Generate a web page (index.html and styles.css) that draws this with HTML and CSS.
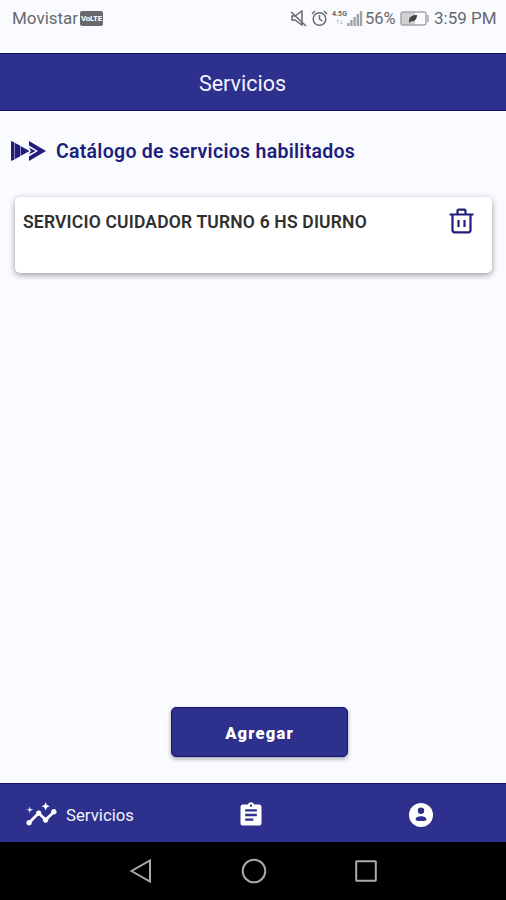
FILE: index.html
```html
<!DOCTYPE html>
<html lang="es">
<head>
  <meta charset="UTF-8">
  <meta name="viewport" content="width=device-width, initial-scale=1.0">
  <title>Servicios</title>
  <link rel="stylesheet" href="styles.css">
</head>
<body>
  <div class="status-bar">
    <span class="carrier">Movistar</span>
    <span class="volte">VoLTE</span>
    <div class="status-icons">
      <svg class="mute" viewBox="0 0 17 17" width="17" height="17">
        <path d="M2 6h3l7-5v14l-7-5H2zM1 2l15 14" />
      </svg>
      <svg class="alarm" viewBox="0 0 17 17" width="17" height="17">
        <circle cx="8.5" cy="9" r="6.3" />
        <path d="M8.5 5v4l3 2M1 4l3-3M16 4l-3-3" />
      </svg>
      <div class="network"><span>4.5G</span><span>↑↓</span></div>
      <svg class="signal" viewBox="0 0 16 16" width="16" height="16">
        <path d="M0 13h2.4v3H0zM3.2 10h2.4v6H3.2zM6.4 7h2.4v9H6.4zM9.6 4H12v12H9.6zM12.8 1h2.4v15h-2.4z" />
      </svg>
      <span class="percent">56%</span>
      <svg class="battery" viewBox="0 0 30 15" width="30" height="15">
        <rect class="charge" x="1" y="1" width="14" height="13" />
        <rect class="shell" x="1" y="1" width="25" height="13" rx="2" />
        <path class="shell" d="M28 4v7" />
        <path class="leaf" d="M9 11c0-5 2-7 8-7 0 5-3 7-6 6l-1 2z" />
      </svg>
      <span class="time">3:59 PM</span>
    </div>
  </div>

  <header class="app-bar">Servicios</header>

  <main>
    <h1>
      <svg viewBox="0 0 35 20" width="35" height="20">
        <path class="solid" d="M0 0l3.500 1.500v17L0 20zM4 2l5 2.500v11L4 18zM9.500 5l9 5-9 5zM18 0l17 10-17 10v-4.500l9-5.500-9-5.500z" />
        <path class="solid" d="M18 6.500l6.500 3.500-6.500 3.500 2-3.500z" />
      </svg>
      <span>Catálogo de servicios habilitados</span>
    </h1>
    <div class="card">
      <span>SERVICIO CUIDADOR TURNO 6 HS DIURNO</span>
      <svg class="trash" viewBox="0 0 25 26" width="25" height="26">
        <path d="M0.500 6.500h24M8.500 6V3q0-1.300 1.300-1.300h5.400q1.300 0 1.300 1.300v3M3.500 7v15q0 2.300 2.300 2.300h13.400q2.300 0 2.300-2.300V7M9.500 12v7M15.500 12v7" />
      </svg>
    </div>
    <button type="button">Agregar</button>
  </main>

  <nav class="tabs">
    <a class="tab tab-services">
      <svg viewBox="0 0 24 24" width="33" height="33">
        <path d="M21 8c-1.450 0-2.260 1.440-1.930 2.510l-3.550 3.560c-.3-.09-.74-.09-1.040 0l-2.550-2.550C12.270 10.450 11.460 9 10 9c-1.450 0-2.270 1.440-1.930 2.520l-4.560 4.550C2.440 15.740 1 16.550 1 18c0 1.100.9 2 2 2 1.450 0 2.260-1.440 1.930-2.510l4.550-4.560c.3.09.74.09 1.040 0l2.550 2.550C12.730 16.550 13.540 18 15 18c1.450 0 2.270-1.440 1.930-2.520l3.560-3.550c1.070.33 2.510-.48 2.510-1.930 0-1.100-.9-2-2-2z" />
        <path d="M15 9l.94-2.070L18 6l-2.060-.93L15 3l-.92 2.070L12 6l2.080.93zM3.500 11L4 9l2-.5L4 8l-.5-2L3 8l-2 .5L3 9z" />
      </svg>
      <span>Servicios</span>
    </a>
    <a class="tab tab-tasks">
      <svg viewBox="0 0 24 24" width="28" height="28">
        <path d="M19 3h-4.180C14.400 1.840 13.300 1 12 1s-2.400.84-2.820 2H5c-1.100 0-2 .9-2 2v14c0 1.100.9 2 2 2h14c1.100 0 2-.9 2-2V5c0-1.100-.9-2-2-2zm-7 0c.55 0 1 .45 1 1s-.45 1-1 1-1-.45-1-1 .45-1 1-1zm2 14H7v-2h7v2zm3-4H7v-2h10v2zm0-4H7V7h10v2z" />
      </svg>
    </a>
    <a class="tab tab-account">
      <svg viewBox="0 0 24 24" width="24" height="24">
        <circle cx="12" cy="12" r="12" />
        <circle class="cut" cx="12" cy="7.800" r="3.200" />
        <path class="cut" d="M6.500 16.500c0-4.500 11-4.500 11 0q-1 1.500-3 1.500h-5q-2 0-3-1.500z" />
      </svg>
    </a>
  </nav>

  <div class="system-nav">
    <svg viewBox="0 0 22 24" width="22" height="24"><path d="M20 1.500v21L1.500 12z" /></svg>
    <svg viewBox="0 0 26 26" width="26" height="26"><circle cx="13" cy="13" r="11.300" /></svg>
    <svg viewBox="0 0 22 22" width="22" height="22"><rect x="1.200" y="1.200" width="19.600" height="19.600" rx="0.500" /></svg>
  </div>
</body>
</html>
```
FILE: styles.css
```css
* {
  box-sizing: border-box;
}
body {
  margin: 0;
  height: 900px;
  display: flex;
  flex-direction: column;
  overflow: hidden;
  font-family: Roboto, sans-serif;
  background-color: #f9fbff;
}
svg {
  display: block;
  flex-shrink: 0;
}
.status-bar {
  height: 53px;
  padding: 0 11px 17px 12px;
  display: flex;
  align-items: center;
  color: #68696c;
  font-size: 17px;
  white-space: nowrap;
}
.carrier {
  width: 67px;
}
.volte {
  width: 23px;
  height: 15px;
  margin-left: 1px;
  border-radius: 2px;
  background-color: #68696c;
  color: #fff;
  font-size: 8px;
  font-weight: bold;
  line-height: 15px;
  letter-spacing: -0.3px;
  text-align: center;
}
.status-icons {
  margin-left: auto;
  display: flex;
  align-items: center;
}
.mute,
.alarm {
  fill: none;
  stroke: #68696c;
  stroke-width: 1.5;
}
.alarm {
  margin-left: 4px;
}
.network {
  width: 15px;
  margin: 0 0 0 4px;
  display: flex;
  flex-direction: column;
  align-items: center;
  font-size: 7px;
  font-weight: bold;
  line-height: 8px;
}
.signal {
  margin-right: 2px;
  fill: #a2a3a5;
}
.percent {
  width: 35px;
  font-size: 16.500px;
}
.charge {
  fill: #d0d1d3;
}
.shell {
  fill: none;
  stroke: #a5a6a8;
  stroke-width: 1.5;
}
.leaf {
  fill: #444;
}
.time {
  width: 61px;
  margin-left: 4px;
}
.app-bar {
  height: 58px;
  padding-right: 21px;
  border-top: 1px solid #10106f;
  border-bottom: 1px solid #10106f;
  background-color: #2d308c;
  color: #f2f3ff;
  font-size: 21.500px;
  line-height: 59px;
  text-align: center;
}
main {
  flex: 1;
  padding: 26px 14px 26px 15px;
  display: flex;
  flex-direction: column;
}
h1 {
  height: 28px;
  margin: 0 0 32px -4px;
  display: flex;
  align-items: center;
  gap: 10px;
  color: #201d7d;
  font-size: 19.500px;
  font-weight: 600;
  letter-spacing: 0.28px;
  white-space: nowrap;
}
h1 span {
  padding-top: 1px;
}
.solid {
  fill: #201d7d;
}
.card {
  height: 76px;
  padding: 11px 18px 0 8px;
  display: flex;
  justify-content: space-between;
  align-items: flex-start;
  border-radius: 5px;
  background-color: #fff;
  box-shadow: 0 2px 6px rgba(0, 0, 0, 0.4);
  color: #303030;
  font-size: 17.500px;
  font-weight: 600;
  letter-spacing: 0.18px;
  line-height: 28px;
  white-space: nowrap;
}
.trash {
  fill: none;
  stroke: #201d7d;
  stroke-width: 2.2;
}
button {
  width: 177px;
  height: 50px;
  margin: auto 0 0 156px;
  padding-top: 3px;
  border: 1px solid #15136f;
  border-radius: 5px;
  background-color: #2d308c;
  box-shadow: 0 2px 4px rgba(0, 0, 0, 0.35);
  color: #fff;
  font-family: inherit;
  font-size: 16.500px;
  font-weight: 900;
  letter-spacing: 1.2px;
}
.tabs {
  height: 59px;
  padding: 3px 73px 0 25px;
  display: flex;
  align-items: center;
  border-top: 1px solid #10106f;
  background-color: #2d308c;
  color: #f2f3ff;
  font-size: 16.800px;
}
.tab {
  display: flex;
  align-items: center;
  gap: 8px;
  fill: #fff;
}
.tab-services {
  width: 212px;
}
.tab-account {
  margin-left: auto;
}
.cut {
  fill: #2d308c;
}
.system-nav {
  height: 58px;
  padding: 0 129px 0 130px;
  display: flex;
  align-items: center;
  justify-content: space-between;
  background-color: #000;
  fill: none;
  stroke: #aaa;
  stroke-width: 2;
}
```
